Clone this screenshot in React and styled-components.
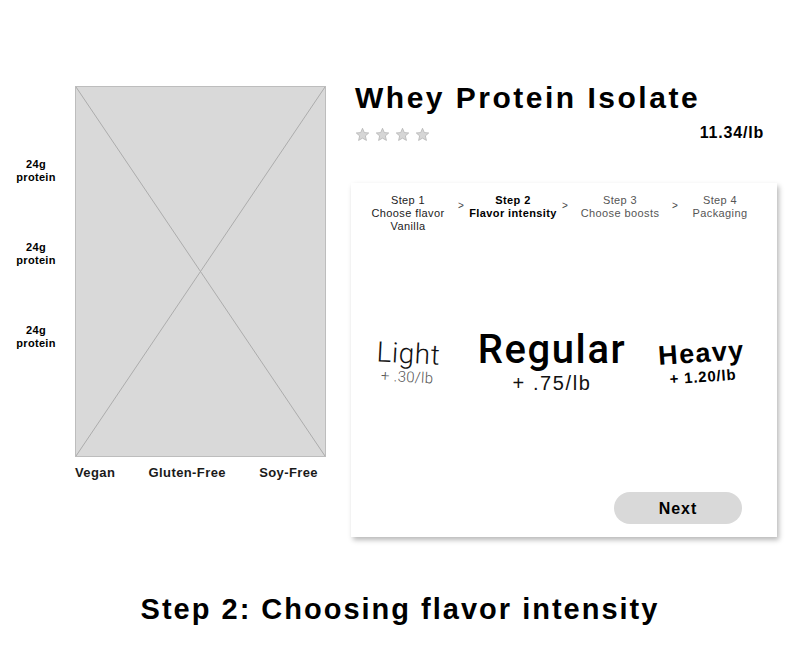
import React from 'react';
import styled, { createGlobalStyle } from 'styled-components';

const GlobalStyle = createGlobalStyle`
  body {
    margin: 0;
    background: #fff;
    font-family: "Liberation Sans", Arial, sans-serif;
    color: #000;
  }
`;

const Page = styled.div`
  width: 800px;
  height: 663px;
  display: flex;
  flex-direction: column;
  overflow: hidden;
`;

const Main = styled.div`
  display: flex;
  padding-top: 86px;
  align-items: flex-start;
`;

const ProductSide = styled.div`
  display: grid;
  grid-template-columns: 72px 251px;
  column-gap: 3px;
`;

const Highlights = styled.div`
  display: flex;
  flex-direction: column;
  align-items: center;
  gap: 58px;
  padding-top: 72px;
`;

const Highlight = styled.div`
  font-size: 11px;
  line-height: 12.5px;
  font-weight: bold;
  text-align: center;
  letter-spacing: 0.3px;
`;

const ImageColumn = styled.div`
  display: flex;
  flex-direction: column;
`;

const Placeholder = styled.div`
  width: 251px;
  height: 371px;
  box-sizing: border-box;
  background: #d9d9d9;
  border: 1px solid #bdbdbd;

  svg {
    display: block;
    width: 100%;
    height: 100%;
  }
`;

const Tags = styled.div`
  display: flex;
  justify-content: space-between;
  padding-right: 8px;
  margin-top: 8px;
`;

const Tag = styled.span`
  font-size: 13px;
  line-height: 15px;
  font-weight: bold;
  color: #1a1a1a;
  letter-spacing: 0.4px;
`;

const DetailSide = styled.div`
  width: 426px;
  margin-left: 25px;
  display: flex;
  flex-direction: column;
`;

const Title = styled.h1`
  margin: -3px 0 0;
  padding-left: 4px;
  font-size: 30px;
  line-height: 30px;
  font-weight: bold;
  letter-spacing: 2.5px;
`;

const RatingRow = styled.div`
  display: flex;
  justify-content: space-between;
  align-items: center;
  margin-top: 12px;
  padding: 0 13px 0 4px;
  height: 16px;
`;

const Stars = styled.div`
  display: flex;
  gap: 5px;
  padding-top: 2px;
`;

const Price = styled.span`
  font-size: 16px;
  line-height: 16px;
  font-weight: bold;
  letter-spacing: 0.8px;
`;

const Card = styled.div`
  margin-top: 42px;
  height: 354px;
  background: #fff;
  box-shadow: 2px 3px 5px rgba(0, 0, 0, 0.28);
  display: flex;
  flex-direction: column;
`;

const StepTrack = styled.div`
  display: grid;
  grid-template-columns: 80px 26px 78px 26px 84px 26px 64px;
  padding: 11px 0 0 17px;
`;

const Step = styled.div`
  display: flex;
  flex-direction: column;
  align-items: center;
  font-size: 11px;
  line-height: 12.8px;
  letter-spacing: 0.4px;
  white-space: nowrap;
  font-weight: ${p => (p.active ? 'bold' : 'normal')};
  color: ${p => (p.active ? '#000' : p.done ? '#222' : '#555')};
`;

const Arrow = styled.div`
  text-align: center;
  font-size: 10px;
  line-height: 12px;
  padding-top: 6px;
  color: #444;
`;

const Options = styled.div`
  flex: 1;
  display: grid;
  grid-template-columns: 114px 174px 126px;
  align-items: center;
`;

const Option = styled.div`
  display: flex;
  flex-direction: column;
  align-items: center;
  white-space: nowrap;
  transform: rotate(${p => p.tilt || 0}deg);
`;

const LightName = styled.span`
  font-family: Roboto, "Liberation Sans", sans-serif;
  font-weight: 300;
  font-size: 28px;
  line-height: 30px;
  letter-spacing: 0.5px;
  color: #111;
`;

const LightPrice = styled.span`
  font-family: Roboto, "Liberation Sans", sans-serif;
  font-weight: 300;
  font-size: 15px;
  line-height: 17px;
  color: #555;
  letter-spacing: 0.3px;
`;

const RegularName = styled.span`
  font-family: Roboto, "Liberation Sans", sans-serif;
  font-weight: 500;
  font-size: 40px;
  line-height: 42px;
  letter-spacing: 1.6px;
`;

const RegularPrice = styled.span`
  font-size: 20px;
  line-height: 24px;
  letter-spacing: 1.6px;
  color: #111;
`;

const HeavyName = styled.span`
  font-size: 27px;
  line-height: 29px;
  font-weight: bold;
  letter-spacing: 1.4px;
`;

const HeavyPrice = styled.span`
  font-size: 15px;
  line-height: 17px;
  font-weight: bold;
  letter-spacing: 0.8px;
`;

const Footer = styled.div`
  display: flex;
  justify-content: flex-end;
  padding: 0 35px 13px 0;
`;

const NextButton = styled.button`
  width: 128px;
  height: 32px;
  padding: 2px 0 0;
  border: none;
  border-radius: 16px;
  background: #d9d9d9;
  font-family: "Liberation Sans", Arial, sans-serif;
  font-size: 16px;
  font-weight: bold;
  letter-spacing: 1px;
  color: #000;
  cursor: pointer;
`;

const Caption = styled.h2`
  margin: 57px 0 0;
  text-align: center;
  font-size: 29px;
  line-height: 30px;
  font-weight: bold;
  letter-spacing: 2px;
`;

const Star = () => (
  <svg width="15" height="15" viewBox="0 0 24 24">
    <path
      d="M12 2l2.9 6.9 7.1.6-5.4 4.7 1.7 7.3L12 17.8 5.7 21.5l1.7-7.3L2 9.5l7.1-.6z"
      fill="#d6d6d6"
      stroke="#b3b3b3"
      strokeWidth="1.2"
      strokeLinejoin="round"
    />
  </svg>
);

const steps = [
  { lines: ['Step 1', 'Choose flavor', 'Vanilla'], done: true },
  { lines: ['Step 2', 'Flavor intensity'], active: true },
  { lines: ['Step 3', 'Choose boosts'] },
  { lines: ['Step 4', 'Packaging'] },
];

const App = () => {
  return (
    <Page>
      <GlobalStyle />
      <Main>
        <ProductSide>
          <Highlights>
            {[0, 1, 2].map(i => (
              <Highlight key={i}>24g<br />protein</Highlight>
            ))}
          </Highlights>
          <ImageColumn>
            <Placeholder>
              <svg viewBox="0 0 100 100" preserveAspectRatio="none">
                <line x1="0" y1="0" x2="100" y2="100" stroke="#acacac" strokeWidth="1" vectorEffect="non-scaling-stroke" />
                <line x1="100" y1="0" x2="0" y2="100" stroke="#acacac" strokeWidth="1" vectorEffect="non-scaling-stroke" />
              </svg>
            </Placeholder>
            <Tags>
              <Tag>Vegan</Tag>
              <Tag>Gluten-Free</Tag>
              <Tag>Soy-Free</Tag>
            </Tags>
          </ImageColumn>
        </ProductSide>

        <DetailSide>
          <Title>Whey Protein Isolate</Title>
          <RatingRow>
            <Stars>
              <Star /><Star /><Star /><Star />
            </Stars>
            <Price>11.34/lb</Price>
          </RatingRow>

          <Card>
            <StepTrack>
              {steps.map((step, i) => (
                <React.Fragment key={i}>
                  {i > 0 && <Arrow>&gt;</Arrow>}
                  <Step active={step.active} done={step.done}>
                    {step.lines.map((line, j) => (
                      <span key={j}>{line}</span>
                    ))}
                  </Step>
                </React.Fragment>
              ))}
            </StepTrack>

            <Options>
              <Option tilt={3}>
                <LightName>Light</LightName>
                <LightPrice>+ .30/lb</LightPrice>
              </Option>
              <Option>
                <RegularName>Regular</RegularName>
                <RegularPrice>+ .75/lb</RegularPrice>
              </Option>
              <Option tilt={-4}>
                <HeavyName>Heavy</HeavyName>
                <HeavyPrice>+ 1.20/lb</HeavyPrice>
              </Option>
            </Options>

            <Footer>
              <NextButton>Next</NextButton>
            </Footer>
          </Card>
        </DetailSide>
      </Main>

      <Caption>Step 2: Choosing flavor intensity</Caption>
    </Page>
  );
};

export default App;
